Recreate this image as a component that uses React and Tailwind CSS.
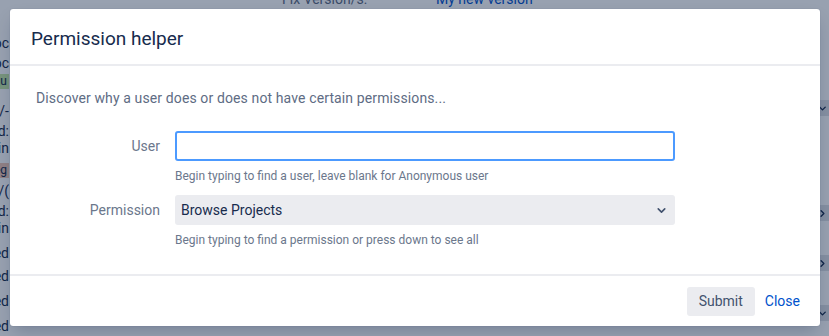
import React from "react";
import { ChevronDown, ChevronRight } from "lucide-react";

// background issue page, only slivers of it show round the dialog
function PageBehind() {
  return (
    <div className="absolute inset-0 bg-white text-[14px] text-[#172b4d]">
      <div className="flex h-[10px] items-end pl-[282px] -mt-[4px]">
        <span className="w-[154px] text-[#5e6c84] leading-[14px]">Fix Version/s:</span>
        <span className="text-[#0052cc] leading-[14px]">My new version</span>
      </div>
      <div className="flex justify-between">
        <div className="w-[60px] -ml-[51px] flex flex-col text-right whitespace-nowrap leading-[20px] pt-[27px]">
          <span>Doc</span>
          <span>Doc</span>
          <span className="mt-[1px] self-end bg-[#c6e7a6] text-[12px] leading-[15px] px-[2px]">Regu</span>
          <span className="mt-[12px]">2017/-</span>
          <span>Red:</span>
          <span className="-mt-[3px]">Main</span>
          <span className="mt-[5px] self-end bg-[#f2c7b6] text-[12px] leading-[15px] px-[2px]">Reg</span>
          <span className="mt-[3px]">2017/(</span>
          <span>Red:</span>
          <span className="-mt-[3px]">Main</span>
          <span className="mt-[5px]">Red</span>
          <span className="mt-[3px]">Red</span>
          <span className="mt-[5px]">Red</span>
          <span className="mt-[5px]">Red</span>
        </div>
        <div className="w-[10px] flex flex-col pt-[94px]">
          <span className="flex h-[16px] items-center bg-[#dfe1e6]"><ChevronDown size={11} strokeWidth={3} className="ml-[-2px]" /></span>
          <span className="mt-[89px] flex h-[16px] items-center bg-[#dfe1e6]"><ChevronRight size={11} strokeWidth={3} className="ml-[-2px]" /></span>
          <span className="mt-[34px] flex h-[16px] items-center bg-[#dfe1e6]"><ChevronRight size={11} strokeWidth={3} className="ml-[-2px]" /></span>
          <span className="mt-[34px] flex h-[16px] items-center bg-[#dfe1e6]"><ChevronDown size={11} strokeWidth={3} className="ml-[-2px]" /></span>
        </div>
      </div>
    </div>
  );
}

function Field({ label, help, children }) {
  return (
    <div className="flex flex-col">
      <div className="flex items-center">
        <label className="w-[160px] pr-[15px] text-right text-[14px] text-[#6b778c]">{label}</label>
        {children}
      </div>
      <p className="ml-[160px] mt-[7px] text-[12px] leading-[16px] text-[#6b778c]">{help}</p>
    </div>
  );
}

export default function App() {
  return (
    <div
      className="relative w-[829px] h-[336px] overflow-hidden"
      style={{ fontFamily: "Roboto, 'Liberation Sans', Arial, sans-serif" }}
    >
      <PageBehind />
      <div className="absolute inset-0 bg-[rgba(9,30,66,0.42)]" />

      <div className="absolute left-[10px] top-[9px] w-[810px] h-[317px] flex flex-col rounded-[3px] bg-white shadow-[0_0_1px_rgba(9,30,66,0.31),0_8px_16px_-4px_rgba(9,30,66,0.25)]">
        <header className="h-[57px] shrink-0 flex items-center px-[21px] pt-[4px] border-b-2 border-[#ebecf0]">
          <h2 className="text-[19px] text-[#172b4d] leading-[24px]">Permission helper</h2>
        </header>

        <div className="flex-1 flex flex-col px-[26px] pt-[22px]">
          <p className="text-[14px] leading-[20px] tracking-[0.12px] text-[#5e6c84]">
            Discover why a user does or does not have certain permissions...
          </p>

          <div className="flex flex-col gap-[11px] mt-[23px] -ml-[21px]">
            <Field label="User" help="Begin typing to find a user, leave blank for Anonymous user">
              <input
                type="text"
                className="w-[500px] h-[30px] rounded-[3px] border-2 border-[#4c9aff] bg-white px-[6px] text-[14px] outline-none"
              />
            </Field>
            <Field label="Permission" help="Begin typing to find a permission or press down to see all">
              <div className="w-[500px] h-[30px] rounded-[3px] bg-[#ebecf0] flex items-center justify-between pl-[6px] pr-[7px]">
                <span className="text-[14px] text-[#172b4d]">Browse Projects</span>
                <ChevronDown size={13} strokeWidth={3} className="text-[#42526e]" />
              </div>
            </Field>
          </div>
        </div>

        <footer className="h-[52px] shrink-0 border-t-2 border-[#ebecf0] flex items-center justify-end gap-[10px] pr-[20px]">
          <button className="h-[29px] px-[12px] rounded-[3px] bg-[#ebecf0] text-[14px] text-[#42526e]">Submit</button>
          <a className="text-[14px] text-[#0052cc]">Close</a>
        </footer>
      </div>
    </div>
  );
}
